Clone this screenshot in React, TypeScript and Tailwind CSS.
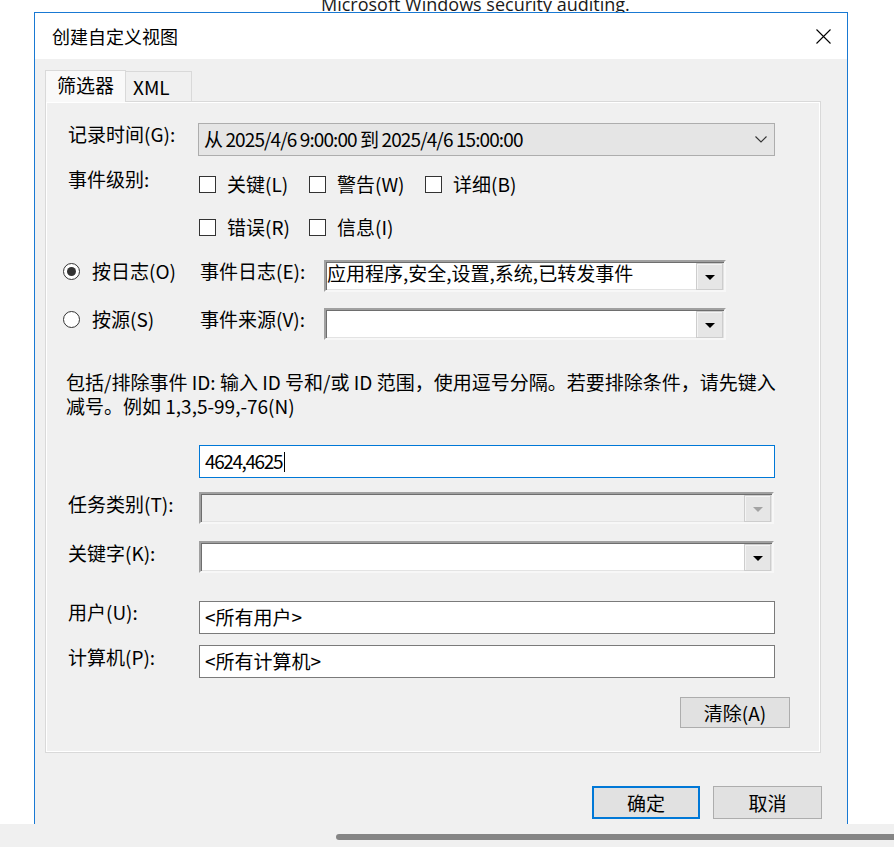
import React from "react";

const Tri = ({ color = "#000" }: { color?: string }) => (
  <svg width="10" height="6" viewBox="0 0 10 6">
    <path d="M0 0H10L5 5Z" fill={color} />
  </svg>
);

const DropBtn = ({ disabled }: { disabled?: boolean }) => (
  <div className="w-[27px] h-[27px] mt-[1px] mr-[1px] bg-[#e6e6e6] border border-[#cdcdcd] shadow-[inset_1px_1px_0_#f4f4f4] flex items-center justify-center pt-[3px]">
    <Tri color={disabled ? "#a3a3a3" : "#000"} />
  </div>
);

const Combo = ({
  text,
  width,
  disabled,
}: {
  text?: string;
  width: string;
  disabled?: boolean;
}) => (
  <div
    className={`${width} h-[32px] border-2 border-t-[#a0a0a0] border-l-[#a0a0a0] border-r-[#f7f7f7] border-b-[#f7f7f7] shadow-[inset_1px_1px_0_#6e6e6e,inset_-1px_-1px_0_#e3e3e3] flex items-start justify-between ${
      disabled ? "bg-[#f0f0f0]" : "bg-white"
    }`}
  >
    <span className="leading-[22px] pl-[1px] whitespace-nowrap">{text}</span>
    <DropBtn disabled={disabled} />
  </div>
);

const Check = ({ label }: { label: string }) => (
  <div className="flex items-center gap-[11px]">
    <span className="w-[17px] h-[17px] border border-[#333] bg-white" />
    <span>{label}</span>
  </div>
);

const Radio = ({ label, on }: { label: string; on?: boolean }) => (
  <div className="flex items-center gap-[12px] h-[22px]">
    <span className="w-[17px] h-[17px] rounded-full border border-[#333] bg-white flex items-center justify-center">
      {on && <span className="w-[9px] h-[9px] rounded-full bg-[#333]" />}
    </span>
    <span className="leading-[22px]">{label}</span>
  </div>
);

const Label = ({ children }: { children: React.ReactNode }) => (
  <div className="w-[131px] shrink-0 whitespace-nowrap">{children}</div>
);

const TextBox = ({ text, focus }: { text: string; focus?: boolean }) => (
  <div
    className={`w-[576px] h-[33px] bg-white border flex items-center pl-[5px] ${
      focus ? "border-[#0078d7]" : "border-[#7a7a7a]"
    }`}
  >
    <span className={focus ? "tracking-[-1.4px]" : ""}>{text}</span>
    {focus && <span className="w-[1px] h-[20px] bg-black ml-[2px]" />}
  </div>
);

export default function App() {
  return (
    <div className="w-[894px] h-[847px] bg-white overflow-hidden flex flex-col font-['Noto_Sans_CJK_SC',sans-serif] text-black text-[19px]">
      {/* window behind the dialog */}
      <div className="h-[12px] overflow-hidden pl-[321px]">
        <p className="mt-[-5px] text-[18px] leading-[18px] font-['Open_Sans',sans-serif] text-[#1a1a1a] whitespace-nowrap">
          Microsoft Windows security auditing.
        </p>
      </div>

      <div className="ml-[34px] w-[814px] h-[812px] border-t border-x border-[#1979d3] flex flex-col">
        <div className="h-[46px] bg-white flex items-center justify-between pl-[17px] pr-[16px]">
          <span className="text-[18px]">创建自定义视图</span>
          <svg width="15" height="15" viewBox="0 0 15 15">
            <path d="M0.5 0.5L14.5 14.5M14.5 0.5L0.5 14.5" stroke="#000" strokeWidth="1.1" />
          </svg>
        </div>

        <div className="flex-1 bg-[#f0f0f0] pt-[11px] pl-[10px] pr-[25px]">
          {/* tabs */}
          <div className="flex items-end h-[31px]">
            <div className="w-[81px] h-[32px] mb-[-1px] relative z-10 bg-[#f9f9f9] border border-b-0 border-[#d9d9d9] pl-[11px] leading-[28px]">
              筛选器
            </div>
            <div className="w-[66px] h-[30px] border border-l-0 border-b-0 border-[#d9d9d9] pl-[7px] leading-[29px]">
              XML
            </div>
          </div>

          <div className="w-[776px] h-[652px] border border-[#d9d9d9] shadow-[inset_1px_1px_0_#fff,inset_-1px_-1px_0_#fff] pl-[22px] flex flex-col">
            <div className="mt-[21px] flex items-center">
              <Label>
                <span className="relative top-[-5px]">记录时间(G):</span>
              </Label>
              <div className="w-[577px] h-[33px] bg-[#e5e5e5] border border-[#adadad] flex items-center justify-between pl-[5px] pr-[7px] ml-[-1px]">
                <span className="tracking-[-0.9px]">从 2025/4/6 9:00:00 到 2025/4/6 15:00:00</span>
                <svg width="12" height="7" viewBox="0 0 12 7">
                  <path d="M0.5 0.5L6 6L11.5 0.5" fill="none" stroke="#333" strokeWidth="1.1" />
                </svg>
              </div>
            </div>

            <div className="mt-[12px] h-[32px] flex items-center">
              <Label>
                <span className="relative top-[-5px]">事件级别:</span>
              </Label>
              <div className="grid grid-cols-[110px_116px_auto]">
                <Check label="关键(L)" />
                <Check label="警告(W)" />
                <Check label="详细(B)" />
              </div>
            </div>

            <div className="mt-[11px] h-[32px] flex items-center">
              <Label>{""}</Label>
              <div className="grid grid-cols-[110px_116px]">
                <Check label="错误(R)" />
                <Check label="信息(I)" />
              </div>
            </div>

            <div className="mt-[17px] flex items-start ml-[-5px]">
              <div className="w-[137px]">
                <Radio label="按日志(O)" on />
              </div>
              <div className="w-[124px] leading-[22px]">事件日志(E):</div>
              <Combo width="w-[402px]" text="应用程序,安全,设置,系统,已转发事件" />
            </div>

            <div className="mt-[16px] flex items-start ml-[-5px]">
              <div className="w-[137px]">
                <Radio label="按源(S)" />
              </div>
              <div className="w-[124px] leading-[22px]">事件来源(V):</div>
              <Combo width="w-[402px]" />
            </div>

            <p className="mt-[30px] ml-[-2px] leading-[24px] whitespace-nowrap">
              包括/排除事件 ID: 输入 ID 号和/或 ID 范围，使用逗号分隔。若要排除条件，请先键入
              <br />
              减号。例如 1,3,5-99,-76(N)
            </p>

            <div className="mt-[27px] flex">
              <Label>{""}</Label>
              <TextBox text="4624,4625" focus />
            </div>

            <div className="mt-[14px] flex items-center">
              <Label>
                <span className="relative top-[-4px]">任务类别(T):</span>
              </Label>
              <Combo width="w-[575px]" disabled />
            </div>

            <div className="mt-[17px] flex items-center">
              <Label>
                <span className="relative top-[-4px]">关键字(K):</span>
              </Label>
              <Combo width="w-[575px]" />
            </div>

            <div className="mt-[28px] flex items-center">
              <Label>
                <span className="relative top-[-5px]">用户(U):</span>
              </Label>
              <TextBox text="<所有用户>" />
            </div>

            <div className="mt-[11px] flex items-center">
              <Label>
                <span className="relative top-[-4px]">计算机(P):</span>
              </Label>
              <TextBox text="<所有计算机>" />
            </div>

            <div className="mt-[19px] flex justify-end pr-[30px]">
              <button className="w-[110px] h-[31px] bg-[#e1e1e1] border border-[#adadad] leading-[28px]">
                清除(A)
              </button>
            </div>
          </div>

          <div className="mt-[33px] flex justify-end gap-[13px]">
            <button className="w-[108px] h-[33px] bg-[#e1e1e1] border-2 border-[#0078d7] leading-[28px]">
              确定
            </button>
            <button className="w-[109px] h-[33px] bg-[#e1e1e1] border border-[#adadad] leading-[30px]">
              取消
            </button>
          </div>
        </div>
      </div>

      {/* scrollbar strip of the window behind */}
      <div className="flex-1 bg-[#f0f0f0] pt-[10px]">
        <div className="ml-[336px] h-[6px] rounded-l-full bg-[#858585]" />
      </div>
    </div>
  );
}
